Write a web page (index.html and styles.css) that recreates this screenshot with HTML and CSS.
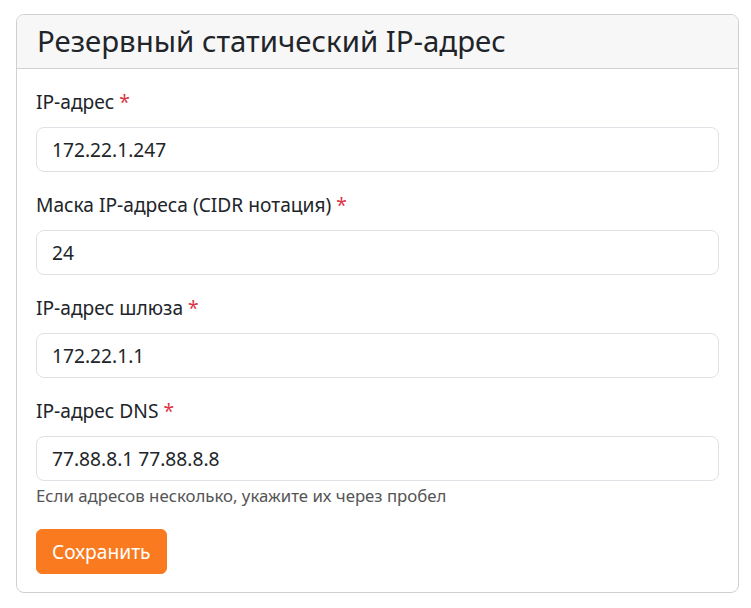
FILE: index.html
```html
<!DOCTYPE html>
<html lang="ru">
<head>
<meta charset="utf-8">
<link rel="stylesheet" href="styles.css">
</head>
<body>
<div class="card">
  <div class="card-header"><h3 class="card-title">Резервный статический IP-адрес</h3></div>
  <form class="card-body">
    <div class="group">
      <label class="label">IP-адрес <span class="req">*</span></label>
      <input class="input" type="text" value="172.22.1.247">
    </div>
    <div class="group">
      <label class="label">Маска IP-адреса (CIDR нотация) <span class="req">*</span></label>
      <input class="input" type="text" value="24">
    </div>
    <div class="group">
      <label class="label">IP-адрес шлюза <span class="req">*</span></label>
      <input class="input" type="text" value="172.22.1.1">
    </div>
    <div class="group last">
      <label class="label">IP-адрес DNS <span class="req">*</span></label>
      <input class="input" type="text" value="77.88.8.1 77.88.8.8">
      <div class="help">Если адресов несколько, укажите их через пробел</div>
    </div>
    <div class="actions"><button class="btn" type="button">Сохранить</button></div>
  </form>
</div>
</body>
</html>
```

FILE: styles.css
```css
html, body { margin: 0; padding: 0; background: #fff; }
body {
  font-family: "Noto Sans", "DejaVu Sans", sans-serif;
  color: #212529;
  padding: 14px 12px 0 16px;
}
.card {
  border: 1px solid #d0d0d0;
  border-radius: 8px;
  overflow: hidden;
}
.card-header {
  background: #f7f7f7;
  border-bottom: 1px solid #d0d0d0;
  padding: 9px 20px;
}
.card-title {
  margin: 0;
  font-size: 29.4px;
  font-weight: 400;
  line-height: 1.2;
}
.card-body {
  display: flex;
  flex-direction: column;
  padding: 20px 19px 18px;
}
.group { display: flex; flex-direction: column; margin-bottom: 20px; }
.group.last { margin-bottom: 21px; }
.label { font-size: 19.2px; line-height: 1.4; margin-bottom: 11px; }
.req { color: #dc3545; }
.input {
  font-family: inherit;
  font-size: 19.2px;
  line-height: 27px;
  color: #212529;
  padding: 8px 15px;
  border: 1px solid #dee2e6;
  border-radius: 8px;
  background: #fff;
  outline: none;
}
.help { font-size: 16.8px; color: #555; margin-top: 2px; line-height: 1.5; }
.actions { display: flex; }
.btn {
  font-family: inherit;
  font-size: 19.2px;
  line-height: 27px;
  padding: 8px 15px;
  color: #fff;
  background: #f97a1f;
  border: 1px solid #f97a1f;
  border-radius: 6px;
}
```
